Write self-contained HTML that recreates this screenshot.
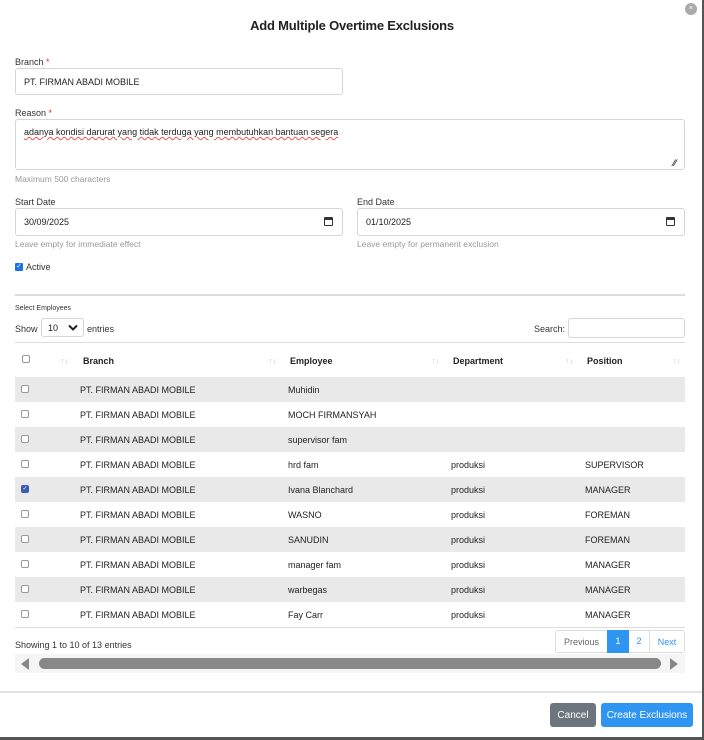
<!DOCTYPE html>
<html><head><meta charset="utf-8"><style>
*{box-sizing:border-box;margin:0;padding:0}
body{width:704px;height:740px;background:#fff;font-family:"Liberation Sans",sans-serif;color:#222;font-size:9px;position:relative;overflow:hidden}
.a{position:absolute}
.inp{position:absolute;border:1px solid #d6d6d6;border-radius:3px;background:#fff;padding-left:8px;display:flex;align-items:center;font-size:9px}
.lbl{font-size:9px;color:#333}
.hint{font-size:8.5px;color:#999}
.req{color:#d33}
.cb{position:absolute;width:8px;height:8px;border:1px solid #999;border-radius:2px;background:#fff}
.row{position:absolute;left:15px;width:670px;height:25px;font-size:9px}
.row span{position:absolute;top:8px}
.g{background:#e9e9e9}
.si{position:absolute;color:#bbb;font-size:7px}
.cal{position:absolute;width:9px;height:9px;border:1.5px solid #333;border-top-width:3px;border-radius:1px}
.btn{position:absolute;height:24px;border-radius:3px;color:#fff;font-size:10px;display:flex;align-items:center;justify-content:center}
</style></head><body>
<div class="a" style="right:0;top:0;width:2px;height:740px;background:#555"></div>
<div class="a" style="left:0;bottom:0;width:704px;height:3px;background:#555"></div>
<div class="a" style="left:685px;top:3px;width:12px;height:12px;border-radius:50%;background:#aaa;color:#fff;font-size:7px;text-align:center;line-height:12px">×</div>
<div class="a" style="left:0;width:704px;top:18px;text-align:center;font-size:13px;font-weight:bold;color:#222;letter-spacing:-0.2px">Add Multiple Overtime Exclusions</div>

<div class="a lbl" style="left:15px;top:57px">Branch <span class="req">*</span></div>
<div class="inp" style="left:15px;top:68px;width:328px;height:27px">PT. FIRMAN ABADI MOBILE</div>
<div class="a lbl" style="left:15px;top:108px">Reason <span class="req">*</span></div>
<div class="inp" style="left:15px;top:119px;width:670px;height:51px;align-items:flex-start;padding-top:7px"><span style="text-decoration:underline wavy #e55;text-decoration-thickness:1px">adanya kondisi darurat yang tidak terduga yang membutuhkan bantuan segera</span></div>
<div class="a" style="left:673px;top:158px;font-size:9px;color:#333;font-weight:bold">⁄⁄</div>
<div class="a hint" style="left:15px;top:174px">Maximum 500 characters</div>

<div class="a lbl" style="left:15px;top:197px">Start Date</div>
<div class="inp" style="left:15px;top:208px;width:328px;height:28px">30/09/2025</div>
<div class="cal" style="left:324px;top:217px"></div>
<div class="a hint" style="left:15px;top:239px">Leave empty for immediate effect</div>
<div class="a lbl" style="left:357px;top:197px">End Date</div>
<div class="inp" style="left:357px;top:208px;width:328px;height:28px">01/10/2025</div>
<div class="cal" style="left:666px;top:217px"></div>
<div class="a hint" style="left:357px;top:239px">Leave empty for permanent exclusion</div>
<div class="a" style="left:15px;top:263px;width:8px;height:8px;background:#1a73e8;border-radius:1px;color:#fff;font-size:7px;line-height:8px;text-align:center">✓</div>
<div class="a lbl" style="left:26px;top:262px">Active</div>

<div class="a" style="left:15px;top:294px;width:670px;height:2px;background:#ddd"></div>
<div class="a" style="left:15px;top:305px;font-size:7px;color:#333">Select Employees</div>
<div class="a lbl" style="left:15px;top:324px">Show</div>
<div class="inp" style="left:41px;top:318px;width:43px;height:19px;padding-left:6px">10
<svg width="10" height="7" style="margin-left:10px" viewBox="0 0 10 7"><path d="M1 1.5L5 5.5L9 1.5" fill="none" stroke="#222" stroke-width="2"/></svg></div>
<div class="a lbl" style="left:87px;top:324px">entries</div>
<div class="a lbl" style="left:534px;top:324px">Search:</div>
<div class="inp" style="left:568px;top:318px;width:117px;height:20px"></div>
<div class="a" style="left:15px;top:342px;width:670px;height:1px;background:#ddd"></div>

<div class="row" style="top:348px;font-weight:bold">
<div class="cb" style="left:7px;top:7px"></div>
<span class="si" style="left:46px;top:10px">↑↓</span>
<span style="left:68px">Branch</span><span class="si" style="left:254px;top:10px">↑↓</span>
<span style="left:275px">Employee</span><span class="si" style="left:417px;top:10px">↑↓</span>
<span style="left:438px">Department</span><span class="si" style="left:551px;top:10px">↑↓</span>
<span style="left:572px">Position</span><span class="si" style="left:658px;top:10px">↑↓</span>
</div>

<div class="row g" style="top:377px"><div class="cb" style="left:6px;top:8px"></div><span style="left:65px">PT. FIRMAN ABADI MOBILE</span><span style="left:273px">Muhidin</span></div>
<div class="row" style="top:402px"><div class="cb" style="left:6px;top:8px"></div><span style="left:65px">PT. FIRMAN ABADI MOBILE</span><span style="left:273px">MOCH FIRMANSYAH</span></div>
<div class="row g" style="top:427px"><div class="cb" style="left:6px;top:8px"></div><span style="left:65px">PT. FIRMAN ABADI MOBILE</span><span style="left:273px">supervisor fam</span></div>
<div class="row" style="top:452px"><div class="cb" style="left:6px;top:8px"></div><span style="left:65px">PT. FIRMAN ABADI MOBILE</span><span style="left:273px">hrd fam</span><span style="left:436px">produksi</span><span style="left:570px">SUPERVISOR</span></div>
<div class="row g" style="top:477px"><div class="cb" style="left:6px;top:8px;background:#3b5bb5;border-color:#3b5bb5;color:#fff;font-size:6px;line-height:6px;text-align:center">✓</div><span style="left:65px">PT. FIRMAN ABADI MOBILE</span><span style="left:273px">Ivana Blanchard</span><span style="left:436px">produksi</span><span style="left:570px">MANAGER</span></div>
<div class="row" style="top:502px"><div class="cb" style="left:6px;top:8px"></div><span style="left:65px">PT. FIRMAN ABADI MOBILE</span><span style="left:273px">WASNO</span><span style="left:436px">produksi</span><span style="left:570px">FOREMAN</span></div>
<div class="row g" style="top:527px"><div class="cb" style="left:6px;top:8px"></div><span style="left:65px">PT. FIRMAN ABADI MOBILE</span><span style="left:273px">SANUDIN</span><span style="left:436px">produksi</span><span style="left:570px">FOREMAN</span></div>
<div class="row" style="top:552px"><div class="cb" style="left:6px;top:8px"></div><span style="left:65px">PT. FIRMAN ABADI MOBILE</span><span style="left:273px">manager fam</span><span style="left:436px">produksi</span><span style="left:570px">MANAGER</span></div>
<div class="row g" style="top:577px"><div class="cb" style="left:6px;top:8px"></div><span style="left:65px">PT. FIRMAN ABADI MOBILE</span><span style="left:273px">warbegas</span><span style="left:436px">produksi</span><span style="left:570px">MANAGER</span></div>
<div class="row" style="top:602px"><div class="cb" style="left:6px;top:8px"></div><span style="left:65px">PT. FIRMAN ABADI MOBILE</span><span style="left:273px">Fay Carr</span><span style="left:436px">produksi</span><span style="left:570px">MANAGER</span></div>
<div class="a" style="left:15px;top:627px;width:670px;height:1px;background:#ddd"></div>

<div class="a lbl" style="left:15px;top:640px">Showing 1 to 10 of 13 entries</div>
<div class="a" style="left:555px;top:630px;width:130px;height:23px;border:1px solid #ddd;border-radius:3px;display:flex;font-size:9px;align-items:center">
<div style="width:51px;text-align:center;color:#666">Previous</div>
<div style="width:22px;height:23px;background:#2f95f3;color:#fff;text-align:center;line-height:23px;margin-top:-1px">1</div>
<div style="width:21px;text-align:center;color:#2f95f3;border-right:1px solid #ddd;height:21px;line-height:21px">2</div>
<div style="flex:1;text-align:center;color:#2f95f3">Next</div></div>
<div class="a" style="left:15px;top:654px;width:670px;height:19px;background:#f5f5f5"></div>
<div class="a" style="left:21px;top:658px;width:0;height:0;border-top:6px solid transparent;border-bottom:6px solid transparent;border-right:8px solid #888"></div>
<div class="a" style="left:39px;top:658px;width:622px;height:11px;border-radius:6px;background:#888"></div>
<div class="a" style="left:670px;top:658px;width:0;height:0;border-top:6px solid transparent;border-bottom:6px solid transparent;border-left:8px solid #888"></div>

<div class="a" style="left:0;top:691px;width:702px;height:2px;background:#e4e4e4"></div>
<div class="btn" style="left:550px;top:703px;width:46px;background:#6c757d">Cancel</div>
<div class="btn" style="left:601px;top:703px;width:92px;background:#2f95f3">Create Exclusions</div>
</body></html>
